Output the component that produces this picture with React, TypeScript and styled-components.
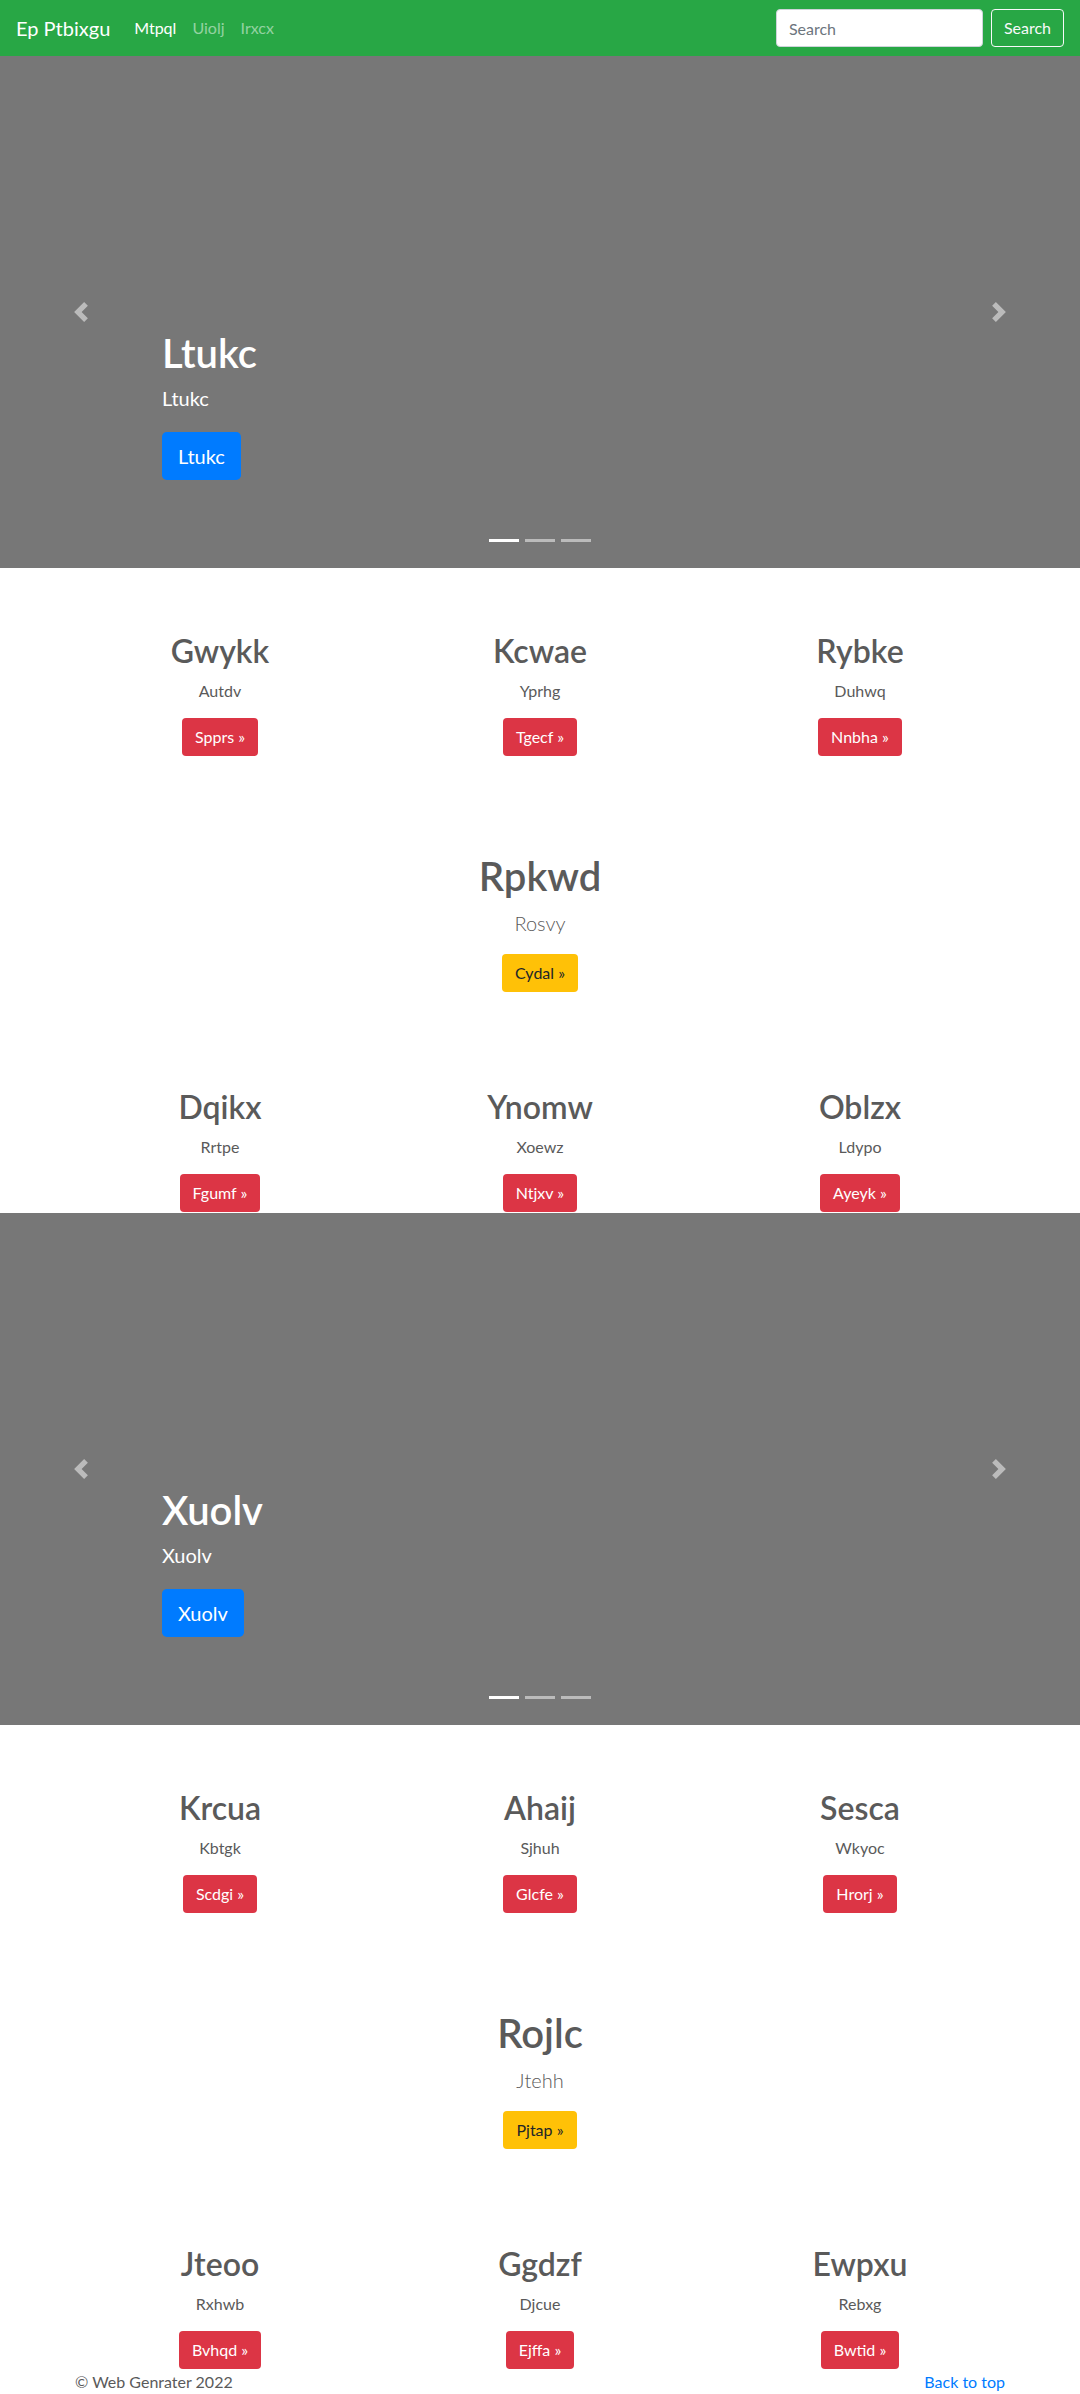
import styled, { createGlobalStyle } from "styled-components";

type Feature = {
  title: string;
  text: string;
  button: string;
};

type Block = {
  slide: string;
  top: Feature[];
  middle: Feature;
  bottom: Feature[];
};

const blocks: Block[] = [
  {
    slide: "Ltukc",
    top: [
      { title: "Gwykk", text: "Autdv", button: "Spprs" },
      { title: "Kcwae", text: "Yprhg", button: "Tgecf" },
      { title: "Rybke", text: "Duhwq", button: "Nnbha" },
    ],
    middle: { title: "Rpkwd", text: "Rosvy", button: "Cydal" },
    bottom: [
      { title: "Dqikx", text: "Rrtpe", button: "Fgumf" },
      { title: "Ynomw", text: "Xoewz", button: "Ntjxv" },
      { title: "Oblzx", text: "Ldypo", button: "Ayeyk" },
    ],
  },
  {
    slide: "Xuolv",
    top: [
      { title: "Krcua", text: "Kbtgk", button: "Scdgi" },
      { title: "Ahaij", text: "Sjhuh", button: "Glcfe" },
      { title: "Sesca", text: "Wkyoc", button: "Hrorj" },
    ],
    middle: { title: "Rojlc", text: "Jtehh", button: "Pjtap" },
    bottom: [
      { title: "Jteoo", text: "Rxhwb", button: "Bvhqd" },
      { title: "Ggdzf", text: "Djcue", button: "Ejffa" },
      { title: "Ewpxu", text: "Rebxg", button: "Bwtid" },
    ],
  },
];

const GlobalStyle = createGlobalStyle`
  body {
    margin: 0;
    background: #fff;
    color: #5a5a5a;
    font-family: Lato, "Open Sans", "Liberation Sans", sans-serif;
    font-size: 16px;
    line-height: 24px;
  }
  * {
    box-sizing: border-box;
  }
`;

const Navbar = styled.nav`
  display: flex;
  align-items: center;
  height: 56px;
  padding: 0 16px;
  background: #28a745;
`;

const Brand = styled.a`
  margin-right: 16px;
  color: #fff;
  font-size: 20px;
  line-height: 30px;
  text-decoration: none;
`;

const NavList = styled.div`
  display: flex;
`;

const NavLink = styled.a<{ $active?: boolean }>`
  padding: 8px;
  color: ${(p) => (p.$active ? "#fff" : "rgba(255, 255, 255, 0.5)")};
  text-decoration: none;
`;

const SearchForm = styled.form`
  display: flex;
  gap: 8px;
  margin-left: auto;
`;

const SearchInput = styled.input`
  width: 207px;
  height: 38px;
  padding: 6px 12px;
  border: 1px solid #ced4da;
  border-radius: 4px;
  font-family: inherit;
  font-size: 16px;
  color: #495057;
  &::placeholder {
    color: #6c757d;
  }
`;

const SearchButton = styled.button`
  height: 38px;
  padding: 6px 12px;
  border: 1px solid #f8f9fa;
  border-radius: 4px;
  background: transparent;
  color: #f8f9fa;
  font-family: inherit;
  font-size: 16px;
  line-height: 24px;
`;

const Slide = styled.section`
  position: relative;
  display: flex;
  flex-direction: column;
  justify-content: flex-end;
  align-items: flex-start;
  height: 512px;
  margin-bottom: 64px;
  padding: 0 0 88px 162px;
  background: #777;
  color: #fff;
`;

const SlideTitle = styled.h1`
  margin: 0 0 6px;
  font-size: 40px;
  font-weight: 600;
  line-height: 48px;
`;

const SlideText = styled.p`
  margin: 0;
  font-size: 20px;
  line-height: 30px;
`;

const SlideButton = styled.a`
  display: inline-flex;
  align-items: center;
  height: 48px;
  margin-top: 19px;
  padding: 0 16px;
  border-radius: 4.8px;
  background: #007bff;
  color: #fff;
  font-size: 20px;
  text-decoration: none;
`;

const Control = styled.a<{ $side: "left" | "right" }>`
  position: absolute;
  top: 0;
  bottom: 0;
  ${(p) => p.$side}: 0;
  width: 15%;
  display: flex;
  align-items: center;
  justify-content: center;
  opacity: 0.5;
`;

const Indicators = styled.ol`
  position: absolute;
  left: 0;
  right: 0;
  bottom: 16px;
  display: flex;
  justify-content: center;
  margin: 0;
  padding: 0;
  list-style: none;
`;

const Indicator = styled.li<{ $active?: boolean }>`
  width: 30px;
  height: 3px;
  margin: 10px 3px;
  background: #fff;
  opacity: ${(p) => (p.$active ? 1 : 0.5)};
`;

const Marketing = styled.div`
  width: 960px;
  margin: 0 auto;
  padding-bottom: 1px;
`;

const Row = styled.div`
  display: flex;
  justify-content: center;
  & + & {
    margin-top: 96px;
  }
`;

const Col = styled.div`
  flex: 0 0 320px;
  padding: 0 15px;
  text-align: center;
`;

const ColTitle = styled.h2`
  margin: 0 0 9px;
  font-size: 32px;
  font-weight: 600;
  line-height: 38px;
`;

const ColText = styled.p`
  margin: 0 0 15px;
`;

const FeatureTitle = styled.h2`
  margin: 0 0 8px;
  font-size: 40px;
  font-weight: 600;
  line-height: 48px;
`;

const Lead = styled.p`
  margin: 0 0 16px;
  font-size: 20px;
  font-weight: 300;
  line-height: 30px;
`;

const Button = styled.a<{ $tone: "danger" | "warning" }>`
  display: inline-block;
  height: 38px;
  padding: 7px 13px;
  border-radius: 4px;
  background: ${(p) => (p.$tone === "danger" ? "#dc3545" : "#ffc107")};
  color: ${(p) => (p.$tone === "danger" ? "#fff" : "#212529")};
  font-size: 16px;
  line-height: 24px;
  text-decoration: none;
`;

const Footer = styled.footer`
  display: flex;
  justify-content: space-between;
  width: 960px;
  height: 24px;
  margin: 0 auto;
  padding: 0 15px;
  a {
    color: #007bff;
    text-decoration: none;
  }
`;

const Chevron = ({ dir }: { dir: "prev" | "next" }) => (
  <svg width="20" height="20" viewBox="0 0 8 8" fill="#fff">
    <path
      d={
        dir === "prev"
          ? "M5.25 0l-4 4 4 4 1.5-1.5L4.25 4l2.5-2.5L5.25 0z"
          : "M2.75 0l-1.5 1.5L3.75 4l-2.5 2.5L2.75 8l4-4-4-4z"
      }
    />
  </svg>
);

const Carousel = ({ label }: { label: string }) => (
  <Slide>
    <SlideTitle>{label}</SlideTitle>
    <SlideText>{label}</SlideText>
    <SlideButton href="#">{label}</SlideButton>
    <Control $side="left" href="#">
      <Chevron dir="prev" />
    </Control>
    <Control $side="right" href="#">
      <Chevron dir="next" />
    </Control>
    <Indicators>
      <Indicator $active />
      <Indicator />
      <Indicator />
    </Indicators>
  </Slide>
);

const SmallFeature = ({ title, text, button }: Feature) => (
  <Col>
    <ColTitle>{title}</ColTitle>
    <ColText>{text}</ColText>
    <Button $tone="danger" href="#">
      {button} »
    </Button>
  </Col>
);

const App = () => {
  return (
    <>
      <GlobalStyle />
      <Navbar>
        <Brand href="#">Ep Ptbixgu</Brand>
        <NavList>
          <NavLink $active href="#">
            Mtpql
          </NavLink>
          <NavLink href="#">Uiolj</NavLink>
          <NavLink href="#">Irxcx</NavLink>
        </NavList>
        <SearchForm onSubmit={(e) => e.preventDefault()}>
          <SearchInput type="text" placeholder="Search" />
          <SearchButton type="submit">Search</SearchButton>
        </SearchForm>
      </Navbar>
      {blocks.map((block) => (
        <div key={block.slide}>
          <Carousel label={block.slide} />
          <Marketing>
            <Row>
              {block.top.map((f) => (
                <SmallFeature key={f.title} {...f} />
              ))}
            </Row>
            <Row>
              <Col>
                <FeatureTitle>{block.middle.title}</FeatureTitle>
                <Lead>{block.middle.text}</Lead>
                <Button $tone="warning" href="#">
                  {block.middle.button} »
                </Button>
              </Col>
            </Row>
            <Row>
              {block.bottom.map((f) => (
                <SmallFeature key={f.title} {...f} />
              ))}
            </Row>
          </Marketing>
        </div>
      ))}
      <Footer>
        <span>© Web Genrater 2022</span>
        <a href="#">Back to top</a>
      </Footer>
    </>
  );
};

export default App;
